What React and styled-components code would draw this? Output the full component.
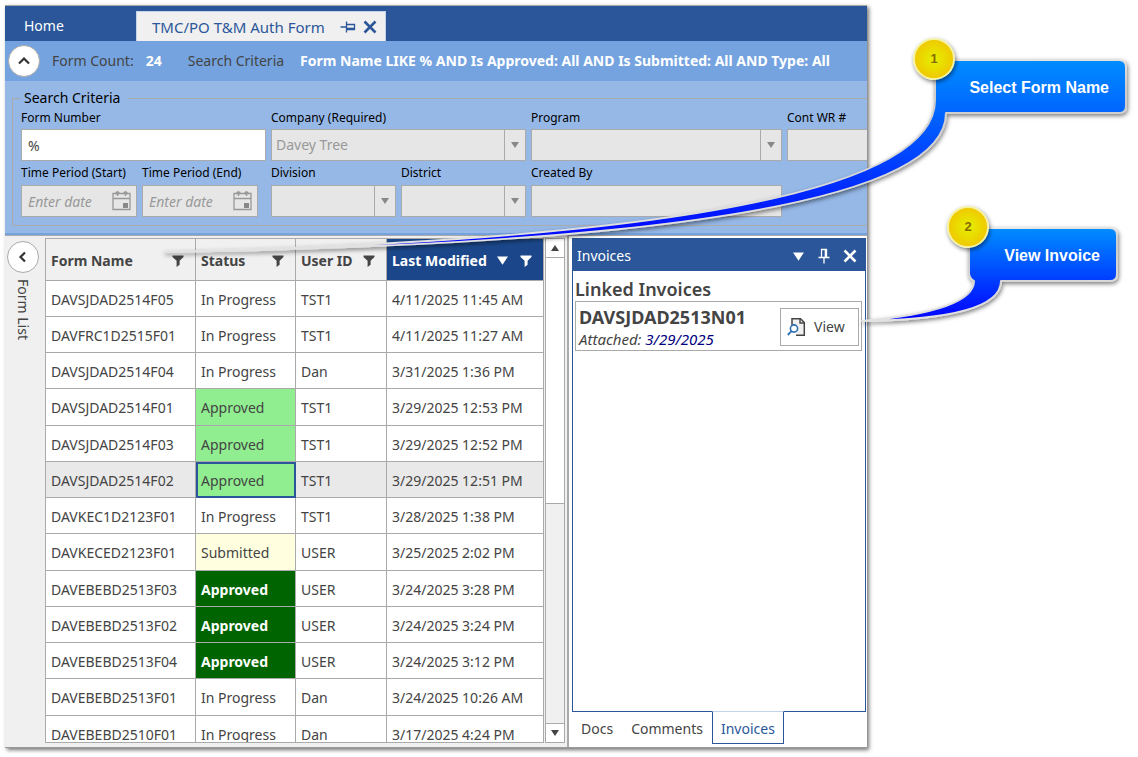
import styled, { createGlobalStyle, css } from 'styled-components';

const GlobalStyle = createGlobalStyle`
  *, *::before, *::after {
    box-sizing: border-box;
  }

  body {
    margin: 0;
    background-color: white;
    color: #444444;
    font-family: 'Noto Sans', 'Open Sans', sans-serif;
    font-size: 14px;
    line-height: 20px;
  }

  button, input, select {
    margin: 0;
    font: inherit;
    color: inherit;
  }
`;

const Page = styled.div`
  position: relative;
  display: flex;
  height: 100vh;
  padding: 5px 271px 9px 5px;
  overflow: hidden;
`;

const Window = styled.div`
  display: flex;
  flex-direction: column;
  flex: 1;
  min-width: 0;
  border-top: 1px solid #aaaaaa;
  border-bottom: 1px solid #9a9a9a;
  background-color: #f0f0f0;
  box-shadow: 2px 2px 4px rgba(0, 0, 0, 0.55);
  overflow: hidden;
`;

const TabBar = styled.nav`
  display: flex;
  align-items: flex-end;
  height: 35px;
  flex-shrink: 0;
  background-color: #2b579a;
`;

const HomeTab = styled.button`
  width: 131px;
  height: 30px;
  padding: 0 0 0 19px;
  border: 0;
  background: none;
  color: white;
  font-size: 14px;
  text-align: left;
`;

const OpenTab = styled.div`
  display: flex;
  align-items: center;
  width: 250px;
  height: 30px;
  padding: 0 4px 0 15px;
  border: 1px solid #c5d3ea;
  border-bottom: 0;
  background-color: #f0f0f0;
  color: #2b579a;
  font-size: 15px;
  white-space: nowrap;
`;

const TabTitle = styled.span`
  flex: 1;
`;

const IconButton = styled.button`
  display: flex;
  align-items: center;
  justify-content: center;
  width: ${props => props.$size || 22}px;
  height: 22px;
  padding: 0;
  border: 0;
  background: none;
  color: inherit;
`;

const Summary = styled.div`
  display: flex;
  align-items: center;
  height: 40px;
  padding-left: 3px;
  flex-shrink: 0;
  background-color: #74a3df;
  white-space: nowrap;
`;

const RoundButton = styled.button`
  display: flex;
  align-items: center;
  justify-content: center;
  width: 32px;
  height: 32px;
  padding: 0;
  border: 1px solid #aaaaaa;
  border-radius: 50%;
  background-color: white;
  flex-shrink: 0;
`;

const SummaryLabel = styled.span`
  margin-left: ${props => props.$gap}px;
`;

const SummaryValue = styled.strong`
  margin-left: ${props => props.$gap}px;
  color: white;
`;

const Criteria = styled.div`
  padding: 7px 0 7px 7px;
  border-bottom: 2px solid #74a3df;
  background-color: #96b8e7;
  flex-shrink: 0;
  overflow: hidden;
`;

const Fieldset = styled.fieldset`
  margin: 0 -8px 0 0;
  padding: 1px 0 8px 8px;
  border: 1px solid #aaaaaa;
`;

const Legend = styled.legend`
  padding: 0 7px 0 3px;
  color: black;
`;

const FieldRow = styled.div`
  display: grid;
  grid-template-columns: 245px 255px 251px 250px;
  column-gap: 5px;

  & + & {
    margin-top: 3px;
  }
`;

const FieldGroup = styled.div`
  display: grid;
  grid-template-columns: ${props => props.$columns};
  column-gap: 5px;
`;

const FieldLabel = styled.label`
  display: block;
  height: 18px;
  margin-bottom: 2px;
  color: black;
  font-size: 12px;
  line-height: 18px;
  white-space: nowrap;

  ${FieldRow} + ${FieldRow} & {
    margin-bottom: 3px;
  }
`;

const TextBox = styled.input`
  display: block;
  width: 100%;
  height: 32px;
  padding: 0 6px;
  border: 1px solid #aaaaaa;
  border-radius: 0;
  background-color: ${props => props.disabled ? '#e6e6e6' : 'white'};

  &::placeholder {
    color: #999999;
    font-style: italic;
    opacity: 1;
  }
`;

const DateWrap = styled.div`
  position: relative;

  svg {
    position: absolute;
    top: 6px;
    right: 6px;
  }
`;

const SelectWrap = styled.div`
  display: flex;
  height: 32px;
  border: 1px solid #aaaaaa;
  background-color: #e6e6e6;
`;

const Select = styled.select`
  flex: 1;
  min-width: 0;
  padding: 0 4px;
  border: 0;
  border-radius: 0;
  appearance: none;
  background: none;
  color: #999999;
  opacity: 1;
`;

const SelectArrow = styled.span`
  display: flex;
  align-items: center;
  justify-content: center;
  width: 21px;
  border-left: 1px solid #aaaaaa;
  color: #888888;
`;

const Body = styled.main`
  display: flex;
  flex: 1;
  min-height: 0;
  border-top: 1px solid #aaaaaa;
`;

const Rail = styled.aside`
  display: flex;
  flex-direction: column;
  align-items: center;
  width: 40px;
  padding: 5px 4px 0 0;
  gap: 6px;
`;

const RailTitle = styled.span`
  writing-mode: vertical-rl;
`;

const ListPane = styled.section`
  display: flex;
  margin: 2px 2px 4px 0;
`;

const GridFrame = styled.div`
  border: 1px solid #aaaaaa;
  border-right: 0;
  background-color: white;
  overflow: hidden;
`;

const Table = styled.table`
  width: 498px;
  border-spacing: 0;
  table-layout: fixed;
`;

const HeadCell = styled.th`
  height: 42px;
  padding: 2px 11px 0 5px;
  border-right: 1px solid #aaaaaa;
  border-bottom: 1px solid #aaaaaa;
  background-color: ${props => props.$sorted ? '#1b478a' : '#f0f0f0'};
  color: ${props => props.$sorted ? 'white' : '#444444'};
  font-weight: 700;
  text-align: left;
  white-space: nowrap;
`;

const HeadContent = styled.div`
  display: flex;
  align-items: center;
  justify-content: space-between;
`;

const HeadIcons = styled.span`
  display: flex;
  align-items: center;
  gap: 12px;
`;

const Row = styled.tr`
  height: 36px;
  background-color: ${props => props.$selected ? '#e9e9e9' : 'white'};

  &:nth-child(4n) {
    height: 37px;
  }
`;

const statusStyles = {
  approved: css`
    background-color: #90ee90;
  `,
  submitted: css`
    background-color: #ffffe0;
  `,
  final: css`
    background-color: #006400;
    color: white;
    font-weight: 700;
  `,
};

const Cell = styled.td`
  padding: 2px 0 0 5px;
  border-right: 1px solid #aaaaaa;
  border-bottom: 1px solid #aaaaaa;
  white-space: nowrap;
  ${props => statusStyles[props.$tone]}
  ${props => props.$focused && css`
    outline: 2px solid #2b579a;
    outline-offset: -2px;
  `}
`;

const ScrollBar = styled.div`
  display: flex;
  flex-direction: column;
  width: 20px;
  margin-left: 1px;
  border: 1px solid #aaaaaa;
`;

const ScrollButton = styled.button`
  display: flex;
  align-items: center;
  justify-content: center;
  height: 19px;
  padding: 0;
  border: 0 solid #aaaaaa;
  border-width: ${props => props.$end ? '1px 0 0' : '0 0 1px'};
  background-color: white;
`;

const ScrollTrack = styled.div`
  flex: 1;
`;

const ScrollThumb = styled.div`
  height: 53%;
  border-bottom: 1px solid #aaaaaa;
  background-color: white;
`;

const SidePane = styled.section`
  display: flex;
  flex-direction: column;
  flex: 1;
  min-width: 0;
  padding: 2px 1px 3px 3px;
  border-left: 2px solid #aaaaaa;
  background-color: white;
`;

const Panel = styled.div`
  flex: 1;
  border: 1px solid #2b579a;
`;

const PanelHeader = styled.header`
  display: flex;
  align-items: center;
  height: 32px;
  padding: 2px 2px 0 4px;
  background-color: #2b579a;
  color: white;
`;

const PanelTitle = styled.span`
  flex: 1;
`;

const PanelBody = styled.div`
  padding: 6px 3px 0 2px;
`;

const PanelHeading = styled.h2`
  margin: 0;
  font-size: 18px;
  font-weight: 600;
  line-height: 24px;
`;

const InvoiceCard = styled.div`
  display: flex;
  align-items: center;
  justify-content: space-between;
  height: 50px;
  padding: 2px 2px 0 3px;
  border: 1px solid #aaaaaa;
`;

const InvoiceName = styled.div`
  font-size: 18px;
  font-weight: 700;
  line-height: 24px;
`;

const Attached = styled.div`
  font-size: 15px;
  font-style: italic;
  line-height: 20px;

  time {
    color: #000080;
  }
`;

const ViewButton = styled.button`
  display: flex;
  align-items: center;
  width: 79px;
  height: 38px;
  padding: 0 6px;
  gap: 7px;
  border: 1px solid #aaaaaa;
  background-color: white;
`;

const PanelTabs = styled.div`
  display: flex;
  height: 32px;
`;

const PanelTab = styled.button`
  height: 33px;
  margin-top: -1px;
  padding: 2px 8px 0;
  border: 1px solid ${props => props.$active ? '#2b579a' : 'transparent'};
  border-top-color: ${props => props.$active ? '#c5d3ea' : 'transparent'};
  background-color: ${props => props.$active ? 'white' : 'transparent'};
  color: ${props => props.$active ? '#2b579a' : '#444444'};
`;

/* The callouts float over the window, anchored to the right edge of the page. */
const Annotations = styled.div`
  position: absolute;
  top: 0;
  right: 0;
  width: 1000px;
  height: 340px;
  pointer-events: none;
`;

const CalloutText = styled.span`
  position: absolute;
  top: ${props => props.$top}px;
  right: ${props => props.$right}px;
  color: white;
  font-family: 'Liberation Sans', Arial, sans-serif;
  font-size: 16px;
  font-weight: 700;
  white-space: nowrap;
`;

const Badge = styled.span`
  position: absolute;
  top: ${props => props.$top}px;
  right: ${props => props.$right}px;
  width: 42px;
  height: 42px;
  border: 2px solid #f4f2a0;
  border-radius: 50%;
  background: radial-gradient(circle, #e4f000 0%, #ebd800 45%, #f5b800 100%);
  box-shadow: 1px 2px 4px rgba(0, 0, 0, 0.5);
  color: #8a6a00;
  font-family: 'Liberation Sans', Arial, sans-serif;
  font-size: 13px;
  font-weight: 700;
  line-height: 38px;
  text-align: center;
`;

const FilterIcon = () => (
  <svg width="12" height="12" viewBox="0 0 12 12" fill="currentColor">
    <path d="M0.5 0.5H11.5V2L7.6 5.8V9.8L4.6 12V5.8L0.5 2Z" />
  </svg>
);

const Triangle = ({ size = 8, up }) => (
  <svg width={size} height={size} viewBox="0 0 8 8" fill="currentColor">
    <path d={up ? 'M0 7L4 1L8 7Z' : 'M0 1H8L4 7Z'} />
  </svg>
);

const CloseIcon = () => (
  <svg width="14" height="14" viewBox="0 0 14 14" fill="none" stroke="currentColor" strokeWidth="2.6">
    <path d="M1.5 1.5L12.5 12.5M12.5 1.5L1.5 12.5" />
  </svg>
);

const PinIcon = ({ side }) => (
  <svg width="16" height="16" viewBox="0 0 16 16" fill="none" stroke="currentColor">
    <g transform={side ? 'rotate(90 8 8)' : undefined}>
      <path d="M5.5 9.5V1.5H10.5V9.5M2.5 9.5H13.5M8 10V15.5" strokeWidth="1.3" />
      <path d="M9.5 2V9" strokeWidth="1.6" />
    </g>
  </svg>
);

const Chevron = ({ left }) => (
  <svg width="14" height="14" viewBox="0 0 14 14" fill="none" stroke="#333333" strokeWidth="2.2">
    <path d={left ? 'M9 2.5L4.5 7L9 11.5' : 'M2 9.5L7 4.5L12 9.5'} />
  </svg>
);

const CalendarIcon = () => (
  <svg width="19" height="20" viewBox="0 0 19 20" fill="none" stroke="#999999">
    <path d="M1 2.5H18V18.5H1ZM1 7.5H18" strokeWidth="1.3" />
    <path d="M3.5 2H7.5M11.5 2H15.5" strokeWidth="2.4" />
    <path d="M5.5 0V5M13.5 0V5" strokeWidth="1.4" />
    <rect x="11" y="12" width="5" height="5" fill="#888888" stroke="none" />
  </svg>
);

const ViewIcon = () => (
  <svg width="20" height="20" viewBox="0 0 20 20" fill="none">
    <path d="M5 8V1.7H13.5L17.3 5.5V18.3H9L10 12Z" fill="#f0f0f0" />
    <path d="M5 8V1.7H13.5L17.3 5.5V18.3H9" stroke="#444444" strokeWidth="1.5" />
    <path d="M13 1.5V6H17.5" stroke="#444444" strokeWidth="1.4" />
    <circle cx="7" cy="11.5" r="3.6" fill="white" stroke="#2f6fb0" strokeWidth="1.6" />
    <path d="M4.5 14.2L0.8 18" stroke="#2f6fb0" strokeWidth="1.8" />
  </svg>
);

const CalloutShapes = () => (
  <svg width="1000" height="340" viewBox="138 0 1000 340">
    <defs>
      <linearGradient id="fillOne" gradientUnits="userSpaceOnUse" x1="0" y1="61" x2="0" y2="245">
        <stop offset="0" stopColor="#008cff" />
        <stop offset="1" stopColor="#0000ff" />
      </linearGradient>
      <linearGradient id="fillTwo" gradientUnits="userSpaceOnUse" x1="0" y1="229" x2="0" y2="320">
        <stop offset="0" stopColor="#008cff" />
        <stop offset="1" stopColor="#0000ff" />
      </linearGradient>
      <linearGradient id="edge" x1="0" y1="0" x2="0.15" y2="1">
        <stop offset="0" stopColor="#f4f4f4" />
        <stop offset="0.3" stopColor="#cccccc" />
        <stop offset="1" stopColor="#e2e2e2" />
      </linearGradient>
      <filter id="shadow" x="-5%" y="-10%" width="110%" height="125%">
        <feDropShadow dx="1" dy="2" stdDeviation="2" floodOpacity="0.5" />
      </filter>
    </defs>
    <g stroke="url(#edge)" strokeWidth="2" strokeLinejoin="round" filter="url(#shadow)">
      <path
        fill="url(#fillOne)"
        d="M935 100V60H1119Q1126 60 1126 67V106Q1126 113 1119 113H946Q946 240 165 252Q935 234 935 100Z"
      />
      <path
        fill="url(#fillTwo)"
        d="M969 228H1110Q1117 228 1117 235V274Q1117 281 1110 281H1001Q1001 319 862 321Q974 311 974 281Q969 278 969 273Z"
      />
    </g>
  </svg>
);

const columns = [
  { label: 'Form Name', width: 150 },
  { label: 'Status', width: 100 },
  { label: 'User ID', width: 91 },
  { label: 'Last Modified', width: 157, sorted: true },
];

const forms = [
  { name: 'DAVSJDAD2514F05', status: 'In Progress', user: 'TST1', modified: '4/11/2025 11:45 AM' },
  { name: 'DAVFRC1D2515F01', status: 'In Progress', user: 'TST1', modified: '4/11/2025 11:27 AM' },
  { name: 'DAVSJDAD2514F04', status: 'In Progress', user: 'Dan', modified: '3/31/2025 1:36 PM' },
  { name: 'DAVSJDAD2514F01', status: 'Approved', tone: 'approved', user: 'TST1', modified: '3/29/2025 12:53 PM' },
  { name: 'DAVSJDAD2514F03', status: 'Approved', tone: 'approved', user: 'TST1', modified: '3/29/2025 12:52 PM' },
  { name: 'DAVSJDAD2514F02', status: 'Approved', tone: 'approved', user: 'TST1', modified: '3/29/2025 12:51 PM', selected: true },
  { name: 'DAVKEC1D2123F01', status: 'In Progress', user: 'TST1', modified: '3/28/2025 1:38 PM' },
  { name: 'DAVKECED2123F01', status: 'Submitted', tone: 'submitted', user: 'USER', modified: '3/25/2025 2:02 PM' },
  { name: 'DAVEBEBD2513F03', status: 'Approved', tone: 'final', user: 'USER', modified: '3/24/2025 3:28 PM' },
  { name: 'DAVEBEBD2513F02', status: 'Approved', tone: 'final', user: 'USER', modified: '3/24/2025 3:24 PM' },
  { name: 'DAVEBEBD2513F04', status: 'Approved', tone: 'final', user: 'USER', modified: '3/24/2025 3:12 PM' },
  { name: 'DAVEBEBD2513F01', status: 'In Progress', user: 'Dan', modified: '3/24/2025 10:26 AM' },
  { name: 'DAVEBEBD2510F01', status: 'In Progress', user: 'Dan', modified: '3/17/2025 4:24 PM' },
];

const TextField = ({ id, label, ...rest }) => (
  <div>
    <FieldLabel htmlFor={id}>{label}</FieldLabel>
    <TextBox id={id} type="text" {...rest} />
  </div>
);

const DateField = ({ id, label }) => (
  <div>
    <FieldLabel htmlFor={id}>{label}</FieldLabel>
    <DateWrap>
      <TextBox id={id} type="text" placeholder="Enter date" disabled />
      <CalendarIcon />
    </DateWrap>
  </div>
);

const SelectField = ({ id, label, value = '' }) => (
  <div>
    <FieldLabel htmlFor={id}>{label}</FieldLabel>
    <SelectWrap>
      <Select id={id} defaultValue={value} disabled>
        <option value={value}>{value}</option>
      </Select>
      <SelectArrow><Triangle /></SelectArrow>
    </SelectWrap>
  </div>
);

function SearchCriteria() {
  return (
    <Criteria>
      <Fieldset>
        <Legend>Search Criteria</Legend>
        <FieldRow>
          <TextField id="formNumber" label="Form Number" defaultValue="%" />
          <SelectField id="company" label="Company (Required)" value="Davey Tree" />
          <SelectField id="program" label="Program" />
          <TextField id="contWr" label="Cont WR #" disabled />
        </FieldRow>
        <FieldRow>
          <FieldGroup $columns="116px 116px">
            <DateField id="start" label="Time Period (Start)" />
            <DateField id="end" label="Time Period (End)" />
          </FieldGroup>
          <FieldGroup $columns="1fr 1fr">
            <SelectField id="division" label="Division" />
            <SelectField id="district" label="District" />
          </FieldGroup>
          <TextField id="createdBy" label="Created By" disabled />
        </FieldRow>
      </Fieldset>
    </Criteria>
  );
}

function FormGrid() {
  return (
    <ListPane>
      <GridFrame>
        <Table>
          <colgroup>
            {columns.map(column => <col key={column.label} width={column.width} />)}
          </colgroup>
          <thead>
            <tr>
              {columns.map(column => (
                <HeadCell key={column.label} $sorted={column.sorted}>
                  <HeadContent>
                    {column.label}
                    <HeadIcons>
                      {column.sorted && <Triangle size={11} />}
                      <FilterIcon />
                    </HeadIcons>
                  </HeadContent>
                </HeadCell>
              ))}
            </tr>
          </thead>
          <tbody>
            {forms.map(form => (
              <Row key={form.name} $selected={form.selected}>
                <Cell>{form.name}</Cell>
                <Cell $tone={form.tone} $focused={form.selected}>{form.status}</Cell>
                <Cell>{form.user}</Cell>
                <Cell>{form.modified}</Cell>
              </Row>
            ))}
          </tbody>
        </Table>
      </GridFrame>
      <ScrollBar>
        <ScrollButton aria-label="Scroll up"><Triangle up /></ScrollButton>
        <ScrollTrack>
          <ScrollThumb />
        </ScrollTrack>
        <ScrollButton aria-label="Scroll down" $end><Triangle /></ScrollButton>
      </ScrollBar>
    </ListPane>
  );
}

function InvoicesPane() {
  return (
    <SidePane>
      <Panel>
        <PanelHeader>
          <PanelTitle>Invoices</PanelTitle>
          <IconButton $size={26} aria-label="Menu"><Triangle size={11} /></IconButton>
          <IconButton $size={26} aria-label="Pin"><PinIcon /></IconButton>
          <IconButton $size={26} aria-label="Close"><CloseIcon /></IconButton>
        </PanelHeader>
        <PanelBody>
          <PanelHeading>Linked Invoices</PanelHeading>
          <InvoiceCard>
            <div>
              <InvoiceName>DAVSJDAD2513N01</InvoiceName>
              <Attached>Attached: <time>3/29/2025</time></Attached>
            </div>
            <ViewButton><ViewIcon />View</ViewButton>
          </InvoiceCard>
        </PanelBody>
      </Panel>
      <PanelTabs>
        <PanelTab>Docs</PanelTab>
        <PanelTab>Comments</PanelTab>
        <PanelTab $active>Invoices</PanelTab>
      </PanelTabs>
    </SidePane>
  );
}

export default function App() {
  return (
    <Page>
      <GlobalStyle />
      <Window>
        <TabBar>
          <HomeTab>Home</HomeTab>
          <OpenTab>
            <TabTitle>TMC/PO T&amp;M Auth Form</TabTitle>
            <IconButton aria-label="Pin tab"><PinIcon side /></IconButton>
            <IconButton aria-label="Close tab"><CloseIcon /></IconButton>
          </OpenTab>
        </TabBar>
        <Summary>
          <RoundButton aria-label="Collapse search"><Chevron /></RoundButton>
          <SummaryLabel $gap={12}>Form Count:</SummaryLabel>
          <SummaryValue $gap={12}>24</SummaryValue>
          <SummaryLabel $gap={26}>Search Criteria</SummaryLabel>
          <SummaryValue $gap={16}>
            Form Name LIKE % AND Is Approved: All AND Is Submitted: All AND Type: All
          </SummaryValue>
        </Summary>
        <SearchCriteria />
        <Body>
          <Rail>
            <RoundButton aria-label="Collapse form list"><Chevron left /></RoundButton>
            <RailTitle>Form List</RailTitle>
          </Rail>
          <FormGrid />
          <InvoicesPane />
        </Body>
      </Window>
      <Annotations>
        <CalloutShapes />
        <Badge $top={38} $right={183}>1</Badge>
        <CalloutText $top={78} $right={29}>Select Form Name</CalloutText>
        <Badge $top={206} $right={149}>2</Badge>
        <CalloutText $top={246} $right={38}>View Invoice</CalloutText>
      </Annotations>
    </Page>
  );
}
